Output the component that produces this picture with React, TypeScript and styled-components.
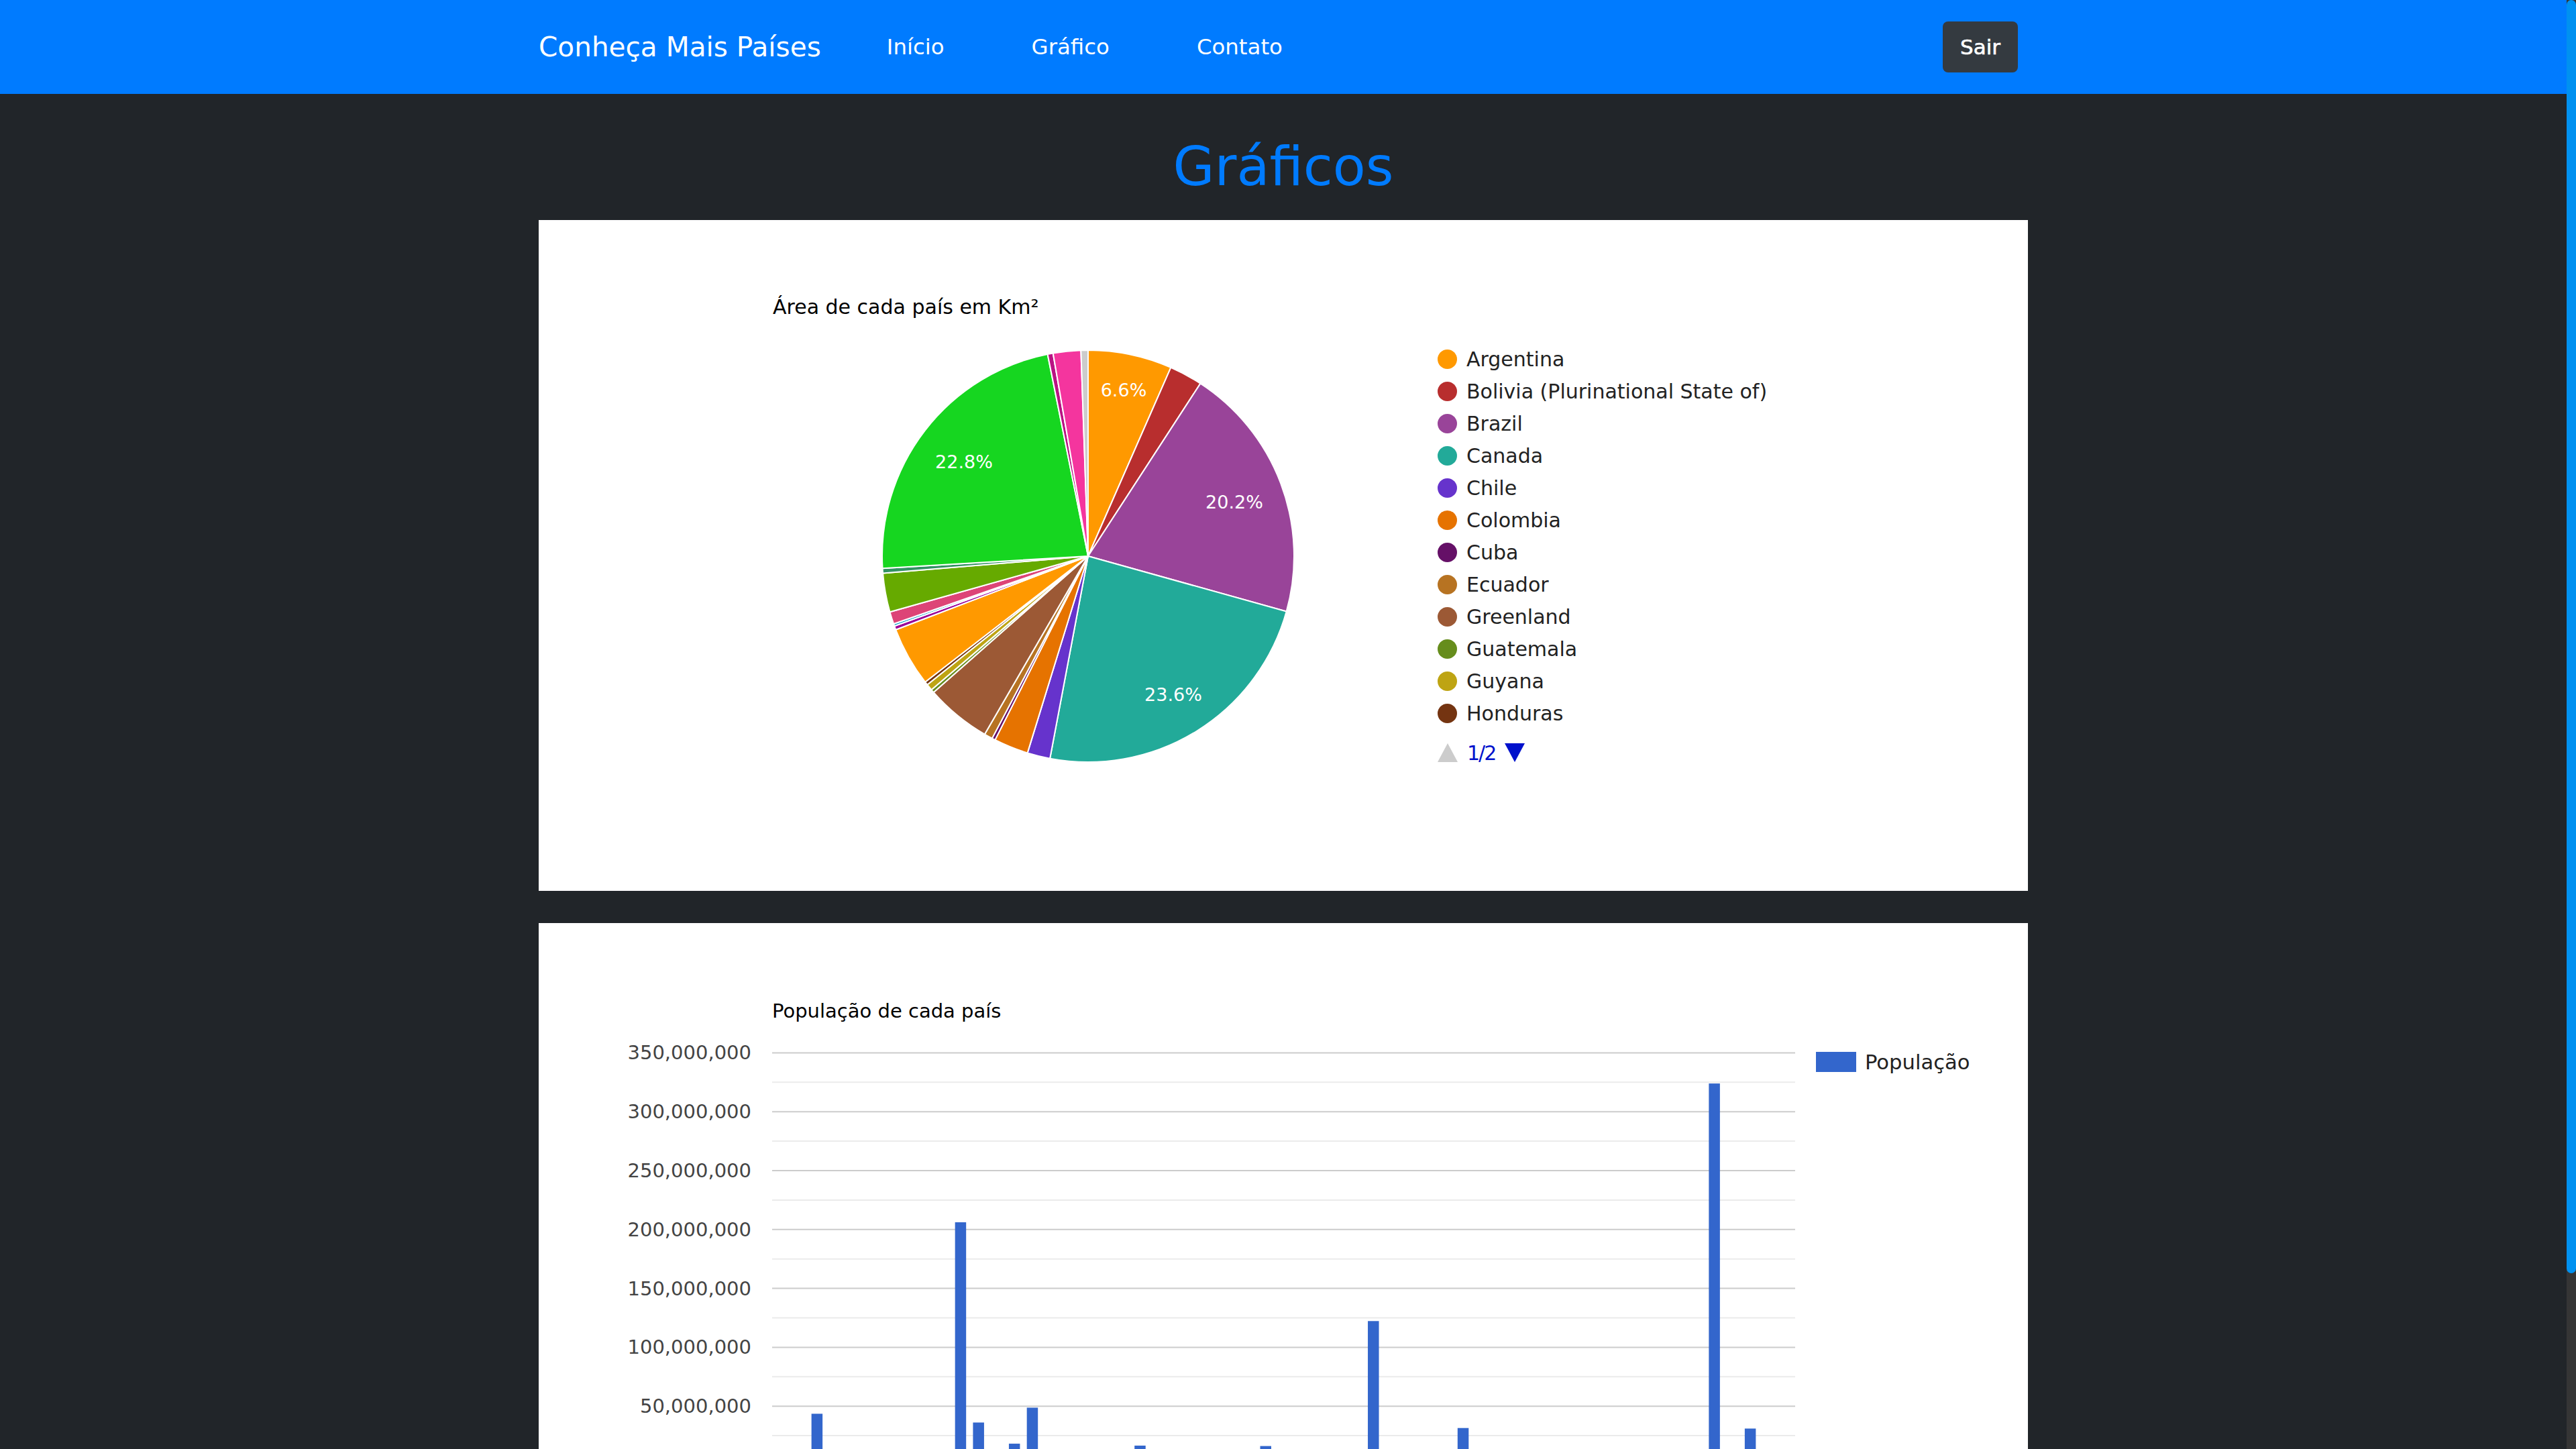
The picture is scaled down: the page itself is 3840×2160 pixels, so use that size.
import React from "react";
import styled, { createGlobalStyle } from "styled-components";

const GlobalStyle = createGlobalStyle`
  body {
    margin: 0;
    background: #212529;
    font-family: "DejaVu Sans", "Liberation Sans", sans-serif;
  }
`;

const PALETTE = [
  "#3366cc", "#dc3912", "#ff9900", "#109618", "#990099", "#0099c6", "#dd4477",
  "#66aa00", "#b82e2e", "#316395", "#994499", "#22aa99", "#aaaa11", "#6633cc",
  "#e67300", "#8b0707", "#651067", "#329262", "#5574a6", "#3b3eac", "#b77322",
  "#16d620", "#b91383", "#f4359e", "#9c5935", "#a9c413", "#2a778d", "#668d1c",
  "#bea413", "#0c5922", "#743411",
];

type Country = [string, number, number];

const COUNTRIES: Country[] = [
  ["Anguilla", 91, 13452],
  ["Antigua and Barbuda", 442, 86295],
  ["Argentina", 2780400, 43590400],
  ["Aruba", 180, 107394],
  ["Bahamas", 13943, 378040],
  ["Barbados", 430, 285000],
  ["Belize", 22966, 370300],
  ["Bermuda", 54, 61954],
  ["Bolivia (Plurinational State of)", 1098581, 10985059],
  ["Bonaire, Sint Eustatius and Saba", 294, 17408],
  ["Brazil", 8515767, 206135893],
  ["Canada", 9984670, 36155487],
  ["Cayman Islands", 264, 58238],
  ["Chile", 756102, 18191900],
  ["Colombia", 1141748, 48759958],
  ["Costa Rica", 51100, 4890379],
  ["Cuba", 109884, 11239004],
  ["Curaçao", 444, 154843],
  ["Dominica", 751, 71293],
  ["Dominican Republic", 48671, 10075045],
  ["Ecuador", 276841, 16545799],
  ["El Salvador", 21041, 6520675],
  ["Falkland Islands (Malvinas)", 12173, 2563],
  ["French Guiana", 0, 254541],
  ["Greenland", 2166086, 55847],
  ["Grenada", 344, 103328],
  ["Guadeloupe", 0, 400132],
  ["Guatemala", 108889, 16176133],
  ["Guyana", 214969, 746900],
  ["Haiti", 27750, 11078033],
  ["Honduras", 112492, 8576532],
  ["Jamaica", 10991, 2723246],
  ["Martinique", 1128, 378243],
  ["Mexico", 1964375, 122273473],
  ["Montserrat", 102, 4922],
  ["Nicaragua", 130373, 6262703],
  ["Panama", 75417, 3814672],
  ["Paraguay", 406752, 6854536],
  ["Peru", 1285216, 31488700],
  ["Puerto Rico", 8870, 3474182],
  ["Saint Barthélemy", 21, 9417],
  ["Saint Kitts and Nevis", 261, 46204],
  ["Saint Lucia", 616, 186000],
  ["Saint Martin (French part)", 53, 36979],
  ["Saint Pierre and Miquelon", 242, 6069],
  ["Saint Vincent and the Grenadines", 389, 109991],
  ["Sint Maarten (Dutch part)", 34, 38247],
  ["South Georgia and the South Sandwich Islands", 3903, 30],
  ["Suriname", 163820, 541638],
  ["Trinidad and Tobago", 5130, 1349667],
  ["Turks and Caicos Islands", 948, 31458],
  ["United States Minor Outlying Islands", 34, 300],
  ["United States of America", 9629091, 323947000],
  ["Uruguay", 181034, 3480222],
  ["Venezuela (Bolivarian Republic of)", 916445, 31028700],
  ["Virgin Islands (British)", 151, 28514],
  ["Virgin Islands (U.S.)", 346, 114743],
];

/* ---------- page shell with scroll rail ---------- */

const Shell = styled.div`
  display: flex;
  align-items: stretch;
`;

const Main = styled.main`
  flex: 1;
  min-width: 0;
  padding-bottom: 82px;
`;

const ScrollRail = styled.div`
  flex: none;
  width: 14px;
  background: #353535;
`;

const ScrollThumb = styled.div`
  height: 1898px;
  border-radius: 7px;
  background: #0091f0;
`;

/* ---------- navbar ---------- */

const Navbar = styled.nav`
  background: #007bff;
  height: 140px;
`;

const NavInner = styled.div`
  width: 2220px;
  height: 100%;
  margin: 0 auto;
  display: flex;
  align-items: center;
`;

const Brand = styled.a`
  font-size: 40.6px;
  color: #ffffff;
  text-decoration: none;
  margin-right: 98px;
  white-space: nowrap;
`;

const NavList = styled.div`
  display: flex;
  gap: 130px;
`;

const NavLink = styled.a`
  font-size: 32.4px;
  color: #ffffff;
  text-decoration: none;
`;

const LogoutButton = styled.button`
  margin-left: auto;
  margin-right: 15px;
  width: 112px;
  height: 76px;
  border: none;
  border-radius: 8px;
  background: #343a40;
  color: #ffffff;
  font-family: inherit;
  font-size: 31px;
  -webkit-text-stroke: 0.6px #ffffff;
  padding: 0;
`;

const PageTitle = styled.h1`
  margin: 61px 0 31px;
  font-size: 80px;
  line-height: 96px;
  font-weight: 400;
  color: #007bff;
  text-align: center;
`;

/* ---------- cards ---------- */

const Card = styled.section`
  width: 2220px;
  height: 1000px;
  margin: 0 auto 48px;
  background: #ffffff;
  box-sizing: border-box;
`;

const PieCard = styled(Card)`
  display: grid;
  grid-template-columns: 1340px auto;
  align-items: start;
`;

const ChartArea = styled.div`
  padding: 112px 0 0 349px;
`;

const ChartTitle = styled.div<{ $size: number }>`
  font-size: ${(p) => p.$size}px;
  line-height: 36px;
  color: #000000;
  white-space: nowrap;
`;

const PieSvg = styled.svg`
  display: block;
  margin: 43px 0 0 160px;
`;

const Legend = styled.ul`
  list-style: none;
  margin: 0;
  padding: 183px 0 0;
`;

const LegendItem = styled.li`
  height: 48px;
  display: flex;
  align-items: center;
  gap: 14px;
  font-size: 30px;
  color: #222222;
  white-space: nowrap;
`;

const Dot = styled.span<{ $color: string }>`
  width: 29px;
  height: 29px;
  border-radius: 50%;
  background: ${(p) => p.$color};
  flex: none;
`;

const Pager = styled.li`
  height: 48px;
  margin-top: 11px;
  display: flex;
  align-items: center;
  gap: 14px;
`;

const PagerText = styled.span`
  font-size: 30px;
  letter-spacing: -2px;
  color: #0011cc;
`;

const BarCard = styled(Card)`
  padding-top: 113px;
  margin-bottom: 0;
`;

const BarTitle = styled(ChartTitle)`
  padding-left: 348px;
`;

const BarBody = styled.div`
  display: flex;
  align-items: flex-start;
  margin-top: 24px;
`;

const BarSvg = styled.svg`
  display: block;
  flex: none;
`;

const BarLegend = styled.div`
  margin: 19px 0 0 31px;
  display: flex;
  align-items: center;
  gap: 13px;
  height: 30px;
  font-size: 30.6px;
  color: #222222;
`;

const Swatch = styled.span`
  width: 60px;
  height: 30px;
  background: #3366cc;
`;

/* ---------- pie chart ---------- */

const CX = 310;
const CY = 310;
const R = 307;

const totalArea = COUNTRIES.reduce((s, c) => s + c[1], 0);
const threshold = totalArea / 720;
const visible = COUNTRIES.map((c, i) => ({ name: c[0], value: c[1], color: PALETTE[i % 31] })).filter(
  (c) => c.value >= threshold
);
const otherValue = totalArea - visible.reduce((s, c) => s + c.value, 0);
const slices = [...visible, { name: "Other", value: otherValue, color: "#cccccc" }];

const LABELS: Record<string, [number, number]> = {
  Argentina: [363, 62],
  Brazil: [528, 229],
  Canada: [437, 516],
  "United States of America": [125, 169],
};

function pt(a: number) {
  return [CX + R * Math.sin(a), CY - R * Math.cos(a)];
}

function PieChart() {
  let acc = 0;
  const paths = slices.map((s) => {
    const a0 = (acc / totalArea) * Math.PI * 2;
    acc += s.value;
    const a1 = (acc / totalArea) * Math.PI * 2;
    const [x0, y0] = pt(a0);
    const [x1, y1] = pt(a1);
    const large = a1 - a0 > Math.PI ? 1 : 0;
    const d = `M${CX},${CY} L${x0.toFixed(2)},${y0.toFixed(2)} A${R},${R} 0 ${large} 1 ${x1.toFixed(2)},${y1.toFixed(2)} Z`;
    return <path key={s.name} d={d} fill={s.color} stroke="#ffffff" strokeWidth={2} strokeLinejoin="round" />;
  });
  const labels = slices
    .filter((s) => LABELS[s.name])
    .map((s) => {
      const [x, y] = LABELS[s.name];
      return (
        <text
          key={s.name}
          x={x}
          y={y}
          textAnchor="middle"
          dominantBaseline="central"
          fill="#ffffff"
          fontSize={27}
          fontFamily='"DejaVu Sans", sans-serif'
        >
          {((s.value / totalArea) * 100).toFixed(1)}%
        </text>
      );
    });
  return (
    <PieSvg width={620} height={620} viewBox="0 0 620 620">
      {paths}
      {labels}
    </PieSvg>
  );
}

/* ---------- bar chart ---------- */

const PLOT_L = 348;
const PLOT_R = 1873;
const Y0 = 635;
const STEP = 87.8; // px per 50M
const SLOT = (PLOT_R - PLOT_L) / COUNTRIES.length;
const BAR_W = 16.5;

const yOf = (v: number) => Y0 - (v / 50e6) * STEP;

function BarChart() {
  const grid = [];
  for (let i = 0; i <= 14; i++) {
    const v = i * 25e6;
    const major = i % 2 === 0;
    grid.push(
      <line
        key={`g${i}`}
        x1={PLOT_L}
        x2={PLOT_R}
        y1={yOf(v)}
        y2={yOf(v)}
        stroke={i === 0 ? "#333333" : major ? "#cccccc" : "#ebebeb"}
        strokeWidth={2}
      />
    );
    if (major && i > 0) {
      grid.push(
        <text
          key={`t${i}`}
          x={317}
          y={yOf(v)}
          textAnchor="end"
          dominantBaseline="central"
          fontSize={29}
          fill="#444444"
          fontFamily='"DejaVu Sans", sans-serif'
        >
          {v.toLocaleString("en-US")}
        </text>
      );
    }
  }
  const bars = COUNTRIES.map((c, i) => {
    const h = (c[2] / 50e6) * STEP;
    return (
      <rect key={c[0]} x={PLOT_L + (i + 0.5) * SLOT - BAR_W / 2} y={Y0 - h} width={BAR_W} height={h} fill="#3366cc" />
    );
  });
  return (
    <BarSvg width={PLOT_R} height={800} viewBox={`0 0 ${PLOT_R} 800`}>
      {grid}
      {bars}
    </BarSvg>
  );
}

/* ---------- icons ---------- */

const Tri = ({ up, color }: { up: boolean; color: string }) => (
  <svg width={30} height={30} viewBox="0 0 30 30">
    <polygon points={up ? "15,1 30,29 0,29" : "0,1 30,1 15,29"} fill={color} />
  </svg>
);

export default function App() {
  const page = slices.slice(0, 12);
  return (
    <>
      <GlobalStyle />
      <Shell>
        <Main>
          <Navbar>
            <NavInner>
              <Brand href="#">Conheça Mais Países</Brand>
              <NavList>
                <NavLink href="#">Início</NavLink>
                <NavLink href="#">Gráfico</NavLink>
                <NavLink href="#">Contato</NavLink>
              </NavList>
              <LogoutButton>Sair</LogoutButton>
            </NavInner>
          </Navbar>
          <PageTitle>Gráficos</PageTitle>
          <PieCard>
            <ChartArea>
              <ChartTitle $size={30}>Área de cada país em Km²</ChartTitle>
              <PieChart />
            </ChartArea>
            <Legend>
              {page.map((s) => (
                <LegendItem key={s.name}>
                  <Dot $color={s.color} />
                  {s.name}
                </LegendItem>
              ))}
              <Pager>
                <Tri up color="#cccccc" />
                <PagerText>1/2</PagerText>
                <Tri up={false} color="#0011cc" />
              </Pager>
            </Legend>
          </PieCard>
          <BarCard>
            <BarTitle $size={29}>População de cada país</BarTitle>
            <BarBody>
              <BarChart />
              <BarLegend>
                <Swatch />
                População
              </BarLegend>
            </BarBody>
          </BarCard>
        </Main>
        <ScrollRail>
          <ScrollThumb />
        </ScrollRail>
      </Shell>
    </>
  );
}
